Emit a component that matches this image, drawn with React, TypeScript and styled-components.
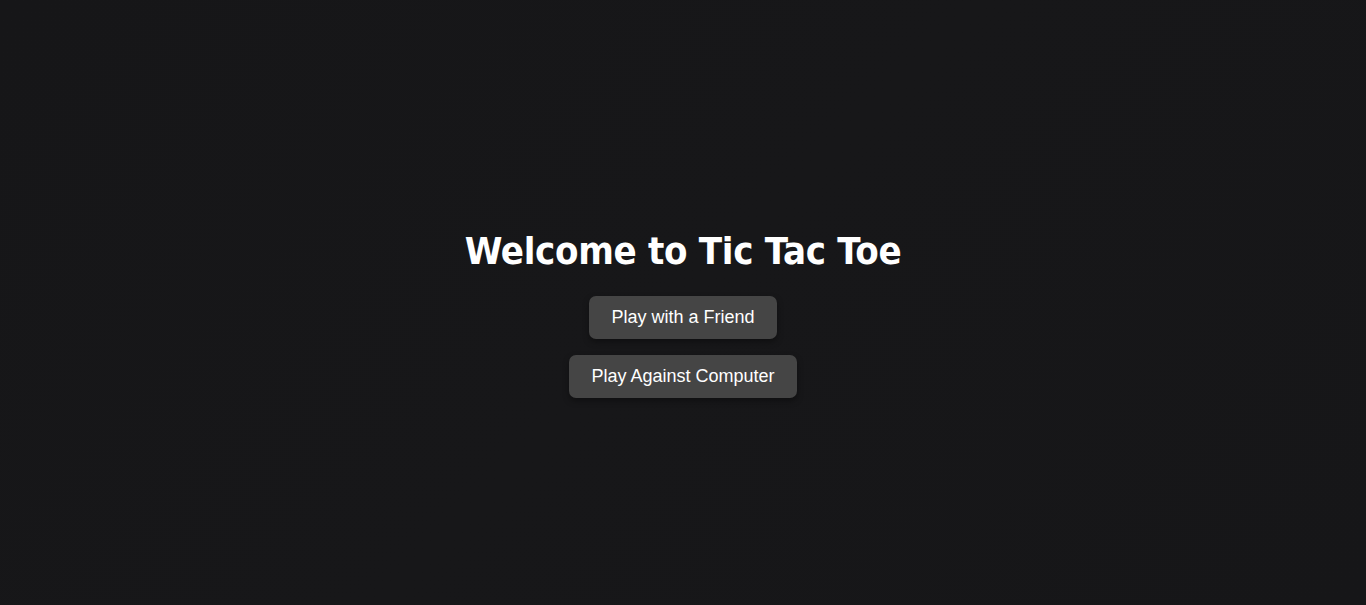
import React from "react";
import styled, { createGlobalStyle } from "styled-components";

const GlobalStyle = createGlobalStyle`
  html, body {
    margin: 0;
    padding: 0;
    background: #161618;
  }
  body {
    font-family: "Liberation Sans", Arial, sans-serif;
  }
`;

const Page = styled.main`
  min-height: 100vh;
  box-sizing: border-box;
  padding-top: 12px;
  display: flex;
  flex-direction: column;
  align-items: center;
  justify-content: center;
  background: linear-gradient(135deg, #161618 0%, #171719 50%, #161618 100%);
  color: #ffffff;
`;

const Title = styled.h1`
  margin: 6px 0 20px;
  font-family: "Comic Sans MS", "DejaVu Sans Condensed", "DejaVu Sans", sans-serif;
  font-stretch: condensed;
  font-weight: 700;
  font-size: 38px;
  line-height: 50px;
  letter-spacing: -0.3px;
  color: #ffffff;
`;

const Menu = styled.div`
  display: flex;
  flex-direction: column;
  align-items: center;
  gap: 16px;
`;

const MenuButton = styled.button`
  font-family: "Liberation Sans", Arial, sans-serif;
  font-size: 18px;
  line-height: 21px;
  padding: 11px 22px;
  border: none;
  border-radius: 7px;
  background: #454545;
  color: #ffffff;
  cursor: pointer;
  box-shadow: 0 3px 6px rgba(0, 0, 0, 0.35);
`;

export default function App() {
  return (
    <>
      <GlobalStyle />
      <Page>
        <Title>Welcome to Tic Tac Toe</Title>
        <Menu>
          <MenuButton>Play with a Friend</MenuButton>
          <MenuButton>Play Against Computer</MenuButton>
        </Menu>
      </Page>
    </>
  );
}
